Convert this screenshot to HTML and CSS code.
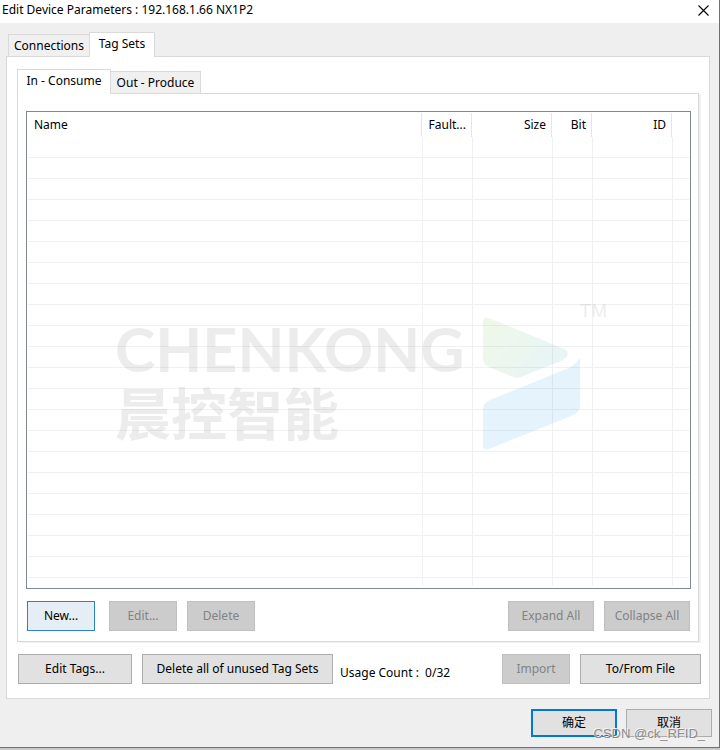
FILE: index.html
```html
<!DOCTYPE html>
<html lang="en">
<head>
<meta charset="utf-8">
<title>Edit Device Parameters</title>
<link rel="stylesheet" href="styles.css">
</head>
<body>
<div class="dialog" role="dialog" aria-labelledby="dialog-title">
  <header class="titlebar">
    <h1 class="title" id="dialog-title">Edit Device Parameters : 192.168.1.66 NX1P2</h1>
    <button class="close" type="button" aria-label="Close">
      <svg width="11" height="11" viewBox="0 0 11 11"><path d="M.5.5l10 10M10.500.5l-10 10" stroke="#000" stroke-width="1.1" fill="none"/></svg>
    </button>
  </header>
  <main class="content">
    <div class="tabs" role="tablist">
      <button class="tab tab-connections" type="button" role="tab" aria-selected="false">Connections</button>
      <button class="tab tab-sets selected" type="button" role="tab" aria-selected="true">Tag Sets</button>
    </div>
    <section class="panel">
      <div class="tabs" role="tablist">
        <button class="tab tab-consume selected" type="button" role="tab" aria-selected="true">In - Consume</button>
        <button class="tab tab-produce" type="button" role="tab" aria-selected="false">Out - Produce</button>
      </div>
      <section class="subpanel">
        <div class="list">
          <table class="grid">
            <colgroup><col><col class="c-fault"><col class="c-size"><col class="c-bit"><col class="c-id"><col class="c-rest"></colgroup>
            <thead><tr><th class="name">Name</th><th>Fault...</th><th>Size</th><th>Bit</th><th>ID</th><th></th></tr></thead>
            <tbody>
              <tr><td></td><td></td><td></td><td></td><td></td><td></td></tr>
              <tr><td></td><td></td><td></td><td></td><td></td><td></td></tr>
              <tr><td></td><td></td><td></td><td></td><td></td><td></td></tr>
              <tr><td></td><td></td><td></td><td></td><td></td><td></td></tr>
              <tr><td></td><td></td><td></td><td></td><td></td><td></td></tr>
              <tr><td></td><td></td><td></td><td></td><td></td><td></td></tr>
              <tr><td></td><td></td><td></td><td></td><td></td><td></td></tr>
              <tr><td></td><td></td><td></td><td></td><td></td><td></td></tr>
              <tr><td></td><td></td><td></td><td></td><td></td><td></td></tr>
              <tr><td></td><td></td><td></td><td></td><td></td><td></td></tr>
              <tr><td></td><td></td><td></td><td></td><td></td><td></td></tr>
              <tr><td></td><td></td><td></td><td></td><td></td><td></td></tr>
              <tr><td></td><td></td><td></td><td></td><td></td><td></td></tr>
              <tr><td></td><td></td><td></td><td></td><td></td><td></td></tr>
              <tr><td></td><td></td><td></td><td></td><td></td><td></td></tr>
              <tr><td></td><td></td><td></td><td></td><td></td><td></td></tr>
              <tr><td></td><td></td><td></td><td></td><td></td><td></td></tr>
              <tr><td></td><td></td><td></td><td></td><td></td><td></td></tr>
              <tr><td></td><td></td><td></td><td></td><td></td><td></td></tr>
              <tr><td></td><td></td><td></td><td></td><td></td><td></td></tr>
              <tr><td></td><td></td><td></td><td></td><td></td><td></td></tr>
              <tr class="last"><td></td><td></td><td></td><td></td><td></td><td></td></tr>
            </tbody>
          </table>
          <div class="brand">
            <div class="brand-words">
              <div class="brand-latin">CHENKONG</div>
              <div class="brand-han" lang="zh">晨控智能</div>
            </div>
            <svg class="brand-mark" width="98" height="134" viewBox="0 0 98 134">
              <defs><linearGradient id="leaf" x1="0" y1="0" x2="1" y2=".6"><stop offset="0" stop-color="#7cc832"/><stop offset="1" stop-color="#32a5b4"/></linearGradient></defs>
              <path d="M0 5Q0-1 6 1L81 32Q88 36 82 41Q78 45 70 47L38 60Q34 62 30 60L6 50Q0 47 0 42Z" fill="url(#leaf)"/>
              <path d="M0 92Q0 86 7 83L86 51Q92 48 97 41V89Q97 95 88 99L6 132Q0 134 0 128Z" fill="#1e96e6"/>
            </svg>
            <span class="brand-tm">TM</span>
          </div>
        </div>
        <div class="actions">
          <button class="btn small focus" type="button">New...</button>
          <button class="btn small edit" type="button" disabled>Edit...</button>
          <button class="btn small" type="button" disabled>Delete</button>
          <button class="btn medium push" type="button" disabled>Expand All</button>
          <button class="btn medium" type="button" disabled>Collapse All</button>
        </div>
      </section>
      <div class="tools">
        <button class="btn tags" type="button">Edit Tags...</button>
        <button class="btn unused" type="button">Delete all of unused Tag Sets</button>
        <span class="usage">Usage Count :&nbsp; 0/32</span>
        <button class="btn small push" type="button" disabled>Import</button>
        <button class="btn file" type="button">To/From File</button>
      </div>
    </section>
  </main>
  <footer class="footer" lang="zh">
    <button class="btn medium default" type="button">确定</button>
    <button class="btn medium" type="button">取消</button>
    <span class="credit">CSDN @ck_RFID_</span>
  </footer>
</div>
</body>
</html>
```
FILE: styles.css
```css
* { box-sizing: border-box; }
body {
  margin: 0;
  background: #c8c8c8;
  color: #000;
  font: 12px/16px "Noto Sans", "Noto Sans CJK SC", sans-serif;
}
button { font: inherit; color: inherit; padding: 0; border-radius: 0; }
.dialog {
  background: #efefef;
  border-right: 1px solid #707070;
  border-bottom: 1px solid #707070;
}
.titlebar {
  display: flex;
  justify-content: space-between;
  height: 23px;
  padding: 2px 10px 0 2px;
  background: #fff;
}
.title { margin: 0; font-size: 12px; font-weight: 400; line-height: 16px; }
.close { display: flex; align-items: center; height: 16px; border: 0; background: none; }
.content { padding: 9px 9px 0 6px; }
.tabs { display: flex; align-items: flex-end; height: 24px; }
.tab {
  height: 22px;
  border: 1px solid #d9d9d9;
  border-bottom: 0;
  background: #f0f0f0;
  white-space: nowrap;
}
.tab.selected {
  position: relative;
  height: 25px;
  margin-bottom: -1px;
  padding-bottom: 2px;
  background: #fff;
}
.content > .tabs { padding-left: 2px; }
.tab-connections { width: 81px; border-right: 0; }
.tab-sets { width: 66px; }
.tab-consume { width: 94px; }
.tab-produce { width: 90px; border-left: 0; }
.panel {
  padding: 12px 8px 14px 10px;
  border: 1px solid #d9d9d9;
  background: #fff;
}
.subpanel {
  margin-right: 2px;
  padding: 17px 7px 10px 8px;
  border: 1px solid #d9d9d9;
  box-shadow: 2px 1px 0 #f0f0f0;
}
.list {
  position: relative;
  padding: 1px 1px 2px;
  border: 1px solid #828790;
}
.grid { width: 100%; table-layout: fixed; border-collapse: separate; border-spacing: 0; }
.c-fault { width: 50px; }
.c-size { width: 80px; }
.c-bit { width: 40px; }
.c-id { width: 80px; }
.c-rest { width: 16px; }
.grid th {
  height: 24px;
  padding: 0 7px 0 0;
  background: linear-gradient(#e5e5e5, #e5e5e5) right 1px top / 1px 100% no-repeat;
  font-weight: 400;
  text-align: right;
  white-space: nowrap;
}
.grid th.name { padding-left: 6px; text-align: left; }
.grid th:last-child { background: none; }
.grid td { height: 21px; padding: 0; border-right: 1px solid #f0f0f0; border-bottom: 1px solid #f0f0f0; }
.grid td:last-child { border-right: 0; }
.grid .last td { height: 8px; border-bottom: 0; }
.brand {
  position: absolute;
  top: 205px;
  left: 88px;
  display: flex;
  width: 492px;
  opacity: .11;
  pointer-events: none;
}
.brand-words { width: 368px; color: #606060; white-space: nowrap; }
.brand-latin { font: 700 61px/64px Lato, sans-serif; }
.brand-han { font: 700 56px/60px "Noto Sans CJK SC", sans-serif; }
.brand-mark { flex: none; }
.brand-tm {
  position: absolute;
  top: -16px;
  right: 0;
  color: #606060;
  font: 19px/20px "Liberation Sans", sans-serif;
}
.actions { display: flex; gap: 10px; padding: 12px 1px 0 1px; }
.btn {
  height: 30px;
  border: 1px solid #adadad;
  background: #e1e1e1;
  white-space: nowrap;
}
.btn:disabled { border-color: #bfbfbf; background: #ccc; color: #838383; }
.small { width: 68px; }
.medium { width: 86px; }
.edit { margin-left: 4px; }
.push { margin-left: auto; }
.focus { border-color: #2d82c8; background: #e5edf5; }
.tools { display: flex; gap: 10px; padding-top: 12px; }
.tags { width: 114px; margin-left: 1px; }
.unused { width: 191px; }
.usage { align-self: flex-end; padding-bottom: 3px; margin-left: -3px; }
.file { width: 121px; }
.footer {
  position: relative;
  display: flex;
  justify-content: flex-end;
  gap: 9px;
  padding: 10px 7px 10px;
}
.footer .btn { height: 28px; }
.footer .default { border: 2px solid #0078d7; }
.credit {
  position: absolute;
  right: 14px;
  bottom: 5px;
  color: #8c8c8c;
  font: 13px/16px "Liberation Sans", sans-serif;
  text-shadow: -1px -1px 0 #f4f4f4;
}
```
